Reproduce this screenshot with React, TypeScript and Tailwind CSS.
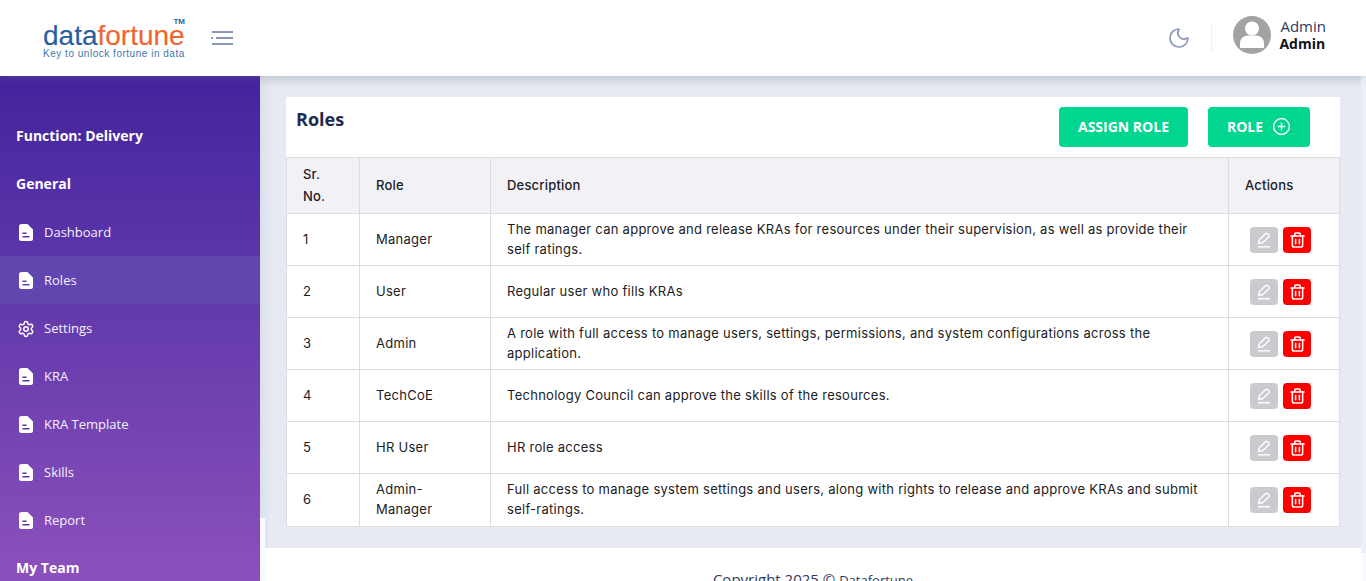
import { CirclePlus, Moon, Settings } from 'lucide-react';

const roles = [
  { id: 1, name: 'Manager', description: 'The manager can approve and release KRAs for resources under their supervision, as well as provide their self ratings.' },
  { id: 2, name: 'User', description: 'Regular user who fills KRAs' },
  { id: 3, name: 'Admin', description: 'A role with full access to manage users, settings, permissions, and system configurations across the application.' },
  { id: 4, name: 'TechCoE', description: 'Technology Council can approve the skills of the resources.' },
  { id: 5, name: 'HR User', description: 'HR role access' },
  { id: 6, name: 'Admin-Manager', description: 'Full access to manage system settings and users, along with rights to release and approve KRAs and submit self-ratings.' },
];

const navItems = ['Dashboard', 'Roles', 'Settings', 'KRA', 'KRA Template', 'Skills', 'Report'];

function DocIcon({ active }: { active: boolean }) {
  return (
    <svg width="14" height="17" viewBox="0 0 14 17" className="shrink-0">
      <path fill="#fff" d="M2.500 0H8.500L14 5.500V14.500A2.500 2.500 0 0 1 11.500 17H2.500A2.500 2.500 0 0 1 0 14.500V2.500A2.500 2.500 0 0 1 2.500 0Z" />
      <path fill={active ? '#6046ae' : '#5a33a6'} d="M3.500 8.500H7.500V10H3.500ZM3.500 12H10.500V13.500H3.500Z" />
    </svg>
  );
}

function MenuIcon() {
  return (
    <svg width="22" height="16" viewBox="0 0 22 16" fill="none" stroke="#8a97b8" strokeWidth="2" className="ml-[26px]">
      <path d="M1 2h21" />
      <path d="M0 8h2M5 8h17" />
      <path d="M1 14h21" />
    </svg>
  );
}

function Avatar() {
  return (
    <svg width="38" height="38" viewBox="0 0 38 38">
      <circle cx="19" cy="19" r="19" fill="#a3a3a3" />
      <circle cx="19" cy="12.500" r="7" fill="#fff" />
      <path d="M7 32v-5c0-4 3.500-7.500 8-7.500h8c4.500 0 8 3.500 8 7.500v5Z" fill="#fff" />
    </svg>
  );
}

function EditIcon() {
  return (
    <svg width="14" height="16" viewBox="0 0 14 16" fill="none" stroke="#fff" strokeWidth="1.400" strokeLinejoin="round">
      <path d="M1.500 11.500 2.500 7.500 8.500 1.700a1.500 1.500 0 0 1 2.100 0l1.100 1.100a1.500 1.500 0 0 1 0 2.100L5.500 10.800Z" />
      <path d="M1 14.800h12" />
    </svg>
  );
}

function TrashIcon() {
  return (
    <svg width="15" height="16" viewBox="0 0 16 17" fill="none" stroke="#fff" strokeWidth="1.600" strokeLinecap="round">
      <path d="M1 4.200h14" />
      <path d="M5 4V2.300a1.300 1.300 0 0 1 1.300-1.300h3.400A1.300 1.300 0 0 1 11 2.300V4" />
      <path d="M2.500 4.500v9.500a2 2 0 0 0 2 2h7a2 2 0 0 0 2-2V4.500" />
      <path d="M6 8v4.500M10 8v4.500" />
    </svg>
  );
}

function Header() {
  return (
    <header className="relative z-10 flex h-[76px] shrink-0 items-center bg-white pl-[43px] pr-[40px] shadow-[0_2px_8px_rgba(120,130,160,0.25)]">
      <div className="relative mt-[5px] w-[142px] whitespace-nowrap font-['Liberation_Sans',sans-serif]">
        <div className="pt-[5px] text-[28px] leading-[20px] [-webkit-text-stroke:0.15px]">
          <span className="text-[#2a5f9e]">data</span>
          <span className="text-[#f0652f]">fortune</span>
        </div>
        <div className="mt-[2px] text-[10px] leading-[12px] tracking-[0.52px] text-[#3f75ad]">Key to unlock fortune in data</div>
        <span className="absolute right-0 top-[-3px] text-[8px] font-bold leading-[8px] text-[#2f5f96]">TM</span>
      </div>
      <MenuIcon />
      <div className="ml-auto flex items-center">
        <Moon size={24} strokeWidth={1.7} className="text-[#8a97b8]" />
        <div className="ml-[20px] h-[28px] w-px bg-[#eef0f4]" />
        <div className="ml-[21px] mt-[-6px] flex items-center">
          <Avatar />
          <div className="ml-[8px] font-['Open_Sans',sans-serif]">
            <div className="pl-[1px] text-[15px] leading-[17px] text-[#2e3a5c]">Admin</div>
            <div className="text-[14px] font-bold leading-[17px] text-[#10131c]">Admin</div>
          </div>
        </div>
      </div>
    </header>
  );
}

function Sidebar() {
  return (
    <aside className="h-full w-[260px] shrink-0 overflow-hidden bg-gradient-to-b from-[#43239d] to-[#8c50bc] pt-[36px] font-['Open_Sans',sans-serif] text-white">
      <div className="flex h-[48px] items-center pb-[2px] pl-[16px] text-[14px] font-bold">Function: Delivery</div>
      <div className="flex h-[48px] items-center pb-[2px] pl-[16px] text-[14px] font-bold">General</div>
      {navItems.map(item => (
        <div
          key={item}
          className={`flex h-[48px] items-center gap-[11px] pl-[19px] pt-[1px] text-[13px] text-[#f6f1fc] ${item === 'Roles' ? 'bg-[#6046ae]' : ''}`}
        >
          {item === 'Settings' ? <Settings size={18} strokeWidth={2} className="ml-[-2px] mr-[-2px] shrink-0 text-white" /> : <DocIcon active={item === 'Roles'} />}
          <span>{item}</span>
        </div>
      ))}
      <div className="flex h-[48px] items-center pb-[2px] pl-[16px] text-[14px] font-bold">My Team</div>
    </aside>
  );
}

function RolesTable() {
  return (
    <table className="w-[1053px] table-fixed border-collapse font-['Inter',sans-serif] text-[13px] leading-[20px] tracking-[0.27px] text-[#1c1c24]">
      <colgroup>
        <col className="w-[73px]" />
        <col className="w-[131px]" />
        <col className="w-[738px]" />
        <col className="w-[111px]" />
      </colgroup>
      <thead>
        <tr className="h-[56px] bg-[#f1f1f6] text-left">
          {['Sr. No.', 'Role', 'Description', 'Actions'].map(label => (
            <th key={label} className="border border-[#dddde0] px-[16px] pb-[2px] pt-0 font-medium leading-[22px] tracking-[0.2px]">
              {label}
            </th>
          ))}
        </tr>
      </thead>
      <tbody>
        {roles.map(role => (
          <tr key={role.id} className={role.id === 6 ? 'h-[53px]' : 'h-[52px]'}>
            <td className="border border-[#dddde0] px-[16px] pb-[2px] pt-0">{role.id}</td>
            <td className="border border-[#dddde0] px-[16px] pb-[2px] pt-0">{role.name}</td>
            <td className="border border-[#dddde0] px-[16px] pb-[2px] pt-0">{role.description}</td>
            <td className="border border-[#dddde0] px-[21px] py-0">
              <div className="flex gap-[5px]">
                <button className="flex h-[26px] w-[28px] items-center justify-center rounded-[4px] bg-[#cbcbcf]">
                  <EditIcon />
                </button>
                <button className="flex h-[26px] w-[28px] items-center justify-center rounded-[4px] bg-[#ff0000]">
                  <TrashIcon />
                </button>
              </div>
            </td>
          </tr>
        ))}
      </tbody>
    </table>
  );
}

export default function App() {
  return (
    <div className="flex h-[581px] w-[1366px] flex-col overflow-hidden bg-white">
      <Header />
      <div className="flex min-h-0 flex-1">
        <Sidebar />
        <main className="relative flex min-w-0 flex-1 flex-col bg-[#e7eaf2] pr-[5px] shadow-[inset_4px_6px_10px_rgba(110,120,140,0.12)]">
          <div className="flex h-[472px] shrink-0 flex-col pl-[26px] pt-[21px]">
            <div className="w-[1054px] bg-white">
              <div className="flex h-[60px] justify-between pl-[10px] pr-[30px] font-['Open_Sans',sans-serif]">
                <h1 className="pt-[10px] text-[18px] font-bold leading-[25px] text-[#1d2b4f]">Roles</h1>
                <div className="flex gap-[20px] pt-[10px]">
                  <button className="flex h-[40px] w-[129px] items-center justify-center rounded-[4px] bg-[#00d68f] pb-[1px] text-[14px] font-bold text-white">
                    ASSIGN ROLE
                  </button>
                  <button className="flex h-[40px] w-[102px] items-center justify-center gap-[9px] rounded-[4px] bg-[#00d68f] pb-[1px] text-[14px] font-bold text-white">
                    ROLE
                    <CirclePlus size={19} strokeWidth={1.8} />
                  </button>
                </div>
              </div>
              <RolesTable />
            </div>
          </div>
          <footer className="ml-[5px] flex-1 bg-white pt-[21px] text-center font-['Open_Sans',sans-serif] text-[15px] leading-[20px] text-[#2e3a5c]">
            Copyright 2025 © <span className="text-[13px]">Datafortune</span>
          </footer>
          {/* scroll tracks on both sides of the content */}
          <div className="absolute bottom-0 left-0 h-[63px] w-[5px] bg-[#f8fafd]" />
          <div className="absolute bottom-[28px] right-0 top-0 w-[5px] bg-[#eceff7]" />
          <div className="absolute bottom-0 right-0 h-[28px] w-[5px] bg-[#f9fafd]" />
        </main>
      </div>
    </div>
  );
}
